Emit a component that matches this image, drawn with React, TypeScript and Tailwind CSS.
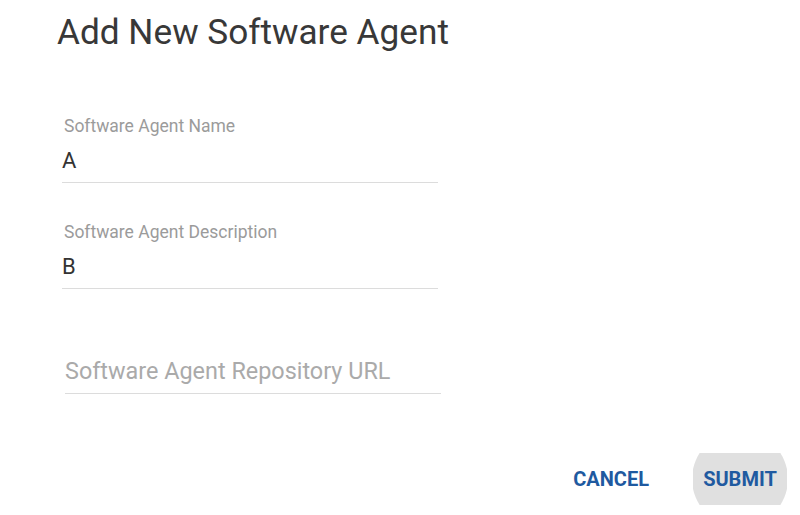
import React, { useState } from 'react';

const font = { fontFamily: 'Roboto, "Liberation Sans", sans-serif' };

const Field: React.FC<{ label: string; value: string; className?: string }> = ({ label, value, className }) => (
    <div className={`w-[376px] ${className ?? ''}`}>
        <label className="block ml-[2px] text-[17.5px] leading-[20px] text-[#9b9b9b]">{label}</label>
        <div className="mt-[10px] h-[37px] border-b border-[#dcdcdc] text-[22px] leading-[30px] text-[#333333]">
            {value}
        </div>
    </div>
);

const App: React.FC = () => {
    const [name] = useState('A');
    const [description] = useState('B');

    return (
        <div className="w-[800px] h-[515px] bg-white relative overflow-hidden" style={font}>
            <h1 className="pl-[57px] pt-[10px] text-[35.2px] leading-[44px] text-[#383838] font-normal">
                Add New Software Agent
            </h1>

            <form className="pl-[62px]">
                <Field label="Software Agent Name" value={name} className="mt-[62px]" />
                <Field label="Software Agent Description" value={description} className="mt-[39px]" />

                <div className="mt-[67px] ml-[3px] w-[376px] h-[38px] border-b border-[#dcdcdc] text-[23.4px] leading-[30px] text-[#aaaaaa]">
                    Software Agent Repository URL
                </div>
            </form>

            <div className="flex justify-end items-center gap-[36px] mt-[59px] pr-[13px]">
                <button type="button" className="px-[8px] h-[52px] text-[20px] font-bold text-[#1f5aa0]">
                    CANCEL
                </button>
                <button type="button" className="relative w-[94px] h-[52px] overflow-hidden text-[20px] font-bold text-[#1f5aa0]">
                    <span className="absolute left-1/2 top-1/2 w-[96px] h-[96px] -translate-x-1/2 -translate-y-1/2 rounded-full bg-[#e0e0e0]" />
                    <span className="relative">SUBMIT</span>
                </button>
            </div>
        </div>
    );
};

export default App;
